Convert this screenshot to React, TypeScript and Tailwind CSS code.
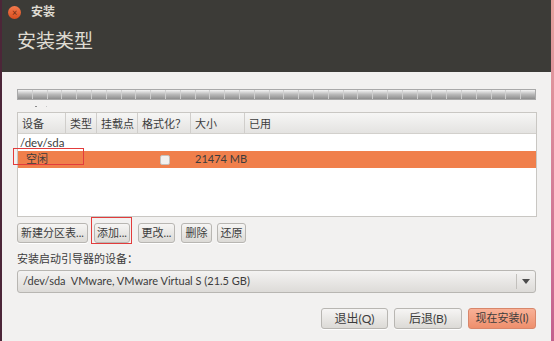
const font = { fontFamily: 'Lato, "Noto Sans CJK SC", sans-serif' };
const cjk = { fontFamily: '"Noto Sans CJK SC", sans-serif' };

function Btn({ children, className = "" }: { children: React.ReactNode; className?: string }) {
  return (
    <div
      className={`flex items-center justify-center whitespace-nowrap rounded-[3px] border border-[#b8b6b2] bg-gradient-to-b from-[#f6f5f4] to-[#dcdad6] text-[11px] text-[#3c3c3c] shadow-[0_1px_0_#fff] ${className}`}
    >
      {children}
    </div>
  );
}

const cols = [
  { label: "设备", w: "w-[48px]" },
  { label: "类型", w: "w-[31px]" },
  { label: "挂载点", w: "w-[41px]" },
  { label: "格式化？", w: "w-[53px]" },
  { label: "大小", w: "w-[54px]" },
  { label: "已用", w: "flex-1" },
];

export default function App() {
  return (
    <div className="flex h-[341px] w-[554px] overflow-hidden bg-[#c7628f]" style={font}>
      {/* left edge */}
      <div className="w-[2px] bg-[#4c2638]" />

      <div className="flex w-[549px] flex-col bg-[#f2f1f0]">
        {/* dark header */}
        <div className="h-[72px] bg-[#3c3b37]">
          <div className="flex h-[24px] items-center pl-[6px]">
            <div className="flex h-[13px] w-[13px] items-center justify-center rounded-full bg-gradient-to-b from-[#f47a4c] to-[#d94d1d] text-[9px] leading-none text-[#6b2a10]">
              ×
            </div>
            <span className="ml-[10px] text-[12px] font-bold text-[#dfdbd2]">安装</span>
          </div>
          <div className="pl-[15px] pt-[5px] text-[19px] leading-[24px] text-[#dfdbd2]">安装类型</div>
        </div>

        <div className="flex flex-1 flex-col px-[15px]">
          {/* partition bar */}
          <div className="mt-[17px] flex h-[11px] w-[519px] border border-[#a9a9a9] bg-gradient-to-b from-[#f4f4f4] via-[#b8b8b8] to-[#8e8e8e]">
            {Array.from({ length: 35 }).map((_, i) => (
              <div key={i} className="h-full flex-1 border-r border-[#cfcfcf] last:border-r-0" />
            ))}
          </div>
          <div className="flex h-[12px] items-center gap-[9px] pl-[18px]">
            <div className="h-[1px] w-[2px] bg-[#8a8a8a]" />
            <div className="h-[1px] w-[1px] bg-[#c8c8c8]" />
          </div>

          {/* table */}
          <div className="flex h-[105px] w-[520px] flex-col border border-[#c9c7c3] bg-white">
            <div className="flex h-[21px] border-b border-[#d2d0cc] bg-gradient-to-b from-[#f6f6f5] to-[#e4e3e1] text-[11px] text-[#3c3c3c]">
              {cols.map((c, i) => (
                <div
                  key={c.label}
                  style={cjk}
                  className={`${c.w} flex items-center whitespace-nowrap pl-[4px] ${i < cols.length - 1 ? "border-r border-[#d0cecb]" : ""}`}
                >
                  {c.label}
                </div>
              ))}
            </div>
            <div className="flex h-[17px] items-center pl-[2px] text-[11.5px] text-[#3c3c3c]">/dev/sda</div>
            <div className="relative flex h-[17px] items-center bg-[#f07f4b] text-[11px] text-[#3c3c3c]">
              <span className="w-[142px] pl-[8px]">空闲</span>
              <div className="h-[10px] w-[10px] rounded-[2px] border border-[#c4c0bc] bg-[#f2f0ee]" />
              <span className="ml-[25px]">21474 MB</span>
              <div className="absolute left-[-5px] top-[-3px] h-[17px] w-[71px] border border-[#e23c3c]" />
            </div>
          </div>

          {/* buttons */}
          <div className="mt-[6px] flex h-[20px] items-stretch">
            <Btn className="w-[71px]">新建分区表...</Btn>
            <div className="relative ml-[6px] flex">
              <Btn className="w-[36px]">添加...</Btn>
              <div className="absolute left-[-3px] top-[-6px] h-[27px] w-[41px] border border-[#e23c3c]" />
            </div>
            <Btn className="ml-[8px] w-[37px]">更改...</Btn>
            <Btn className="ml-[6px] w-[31px]">删除</Btn>
            <Btn className="ml-[5px] w-[29px]">还原</Btn>
          </div>

          <div className="mt-[7px] text-[11px] leading-[18px] text-[#3c3c3c]">安装启动引导器的设备：</div>

          {/* combobox */}
          <div className="mt-[2px] flex h-[23px] w-[519px] items-center rounded-[3px] border border-[#b8b6b2] bg-gradient-to-b from-[#f4f3f2] to-[#dddbd8] text-[11px] text-[#3c3c3c]">
            <span className="flex-1 pl-[5px]">/dev/sda&nbsp;&nbsp;VMware, VMware Virtual S (21.5 GB)</span>
            <div className="h-[15px] w-[1px] bg-[#c2c0bc]" />
            <div className="flex w-[18px] justify-center">
              <svg width="8" height="5" viewBox="0 0 8 5">
                <path d="M0 0 L8 0 L4 5 Z" fill="#4c4c4c" />
              </svg>
            </div>
          </div>

          {/* bottom buttons */}
          <div className="mt-[15px] flex h-[21px] w-[519px] justify-end gap-[6px]">
            <Btn className="w-[67px] text-[12px]">退出(Q)</Btn>
            <Btn className="w-[68px] text-[12px]">后退(B)</Btn>
            <div className="flex w-[68px] items-center justify-center whitespace-nowrap rounded-[3px] border border-[#d8866a] bg-gradient-to-b from-[#f8b197] to-[#ee8f6c] text-[11px] text-[#3c3c3c]">
              现在安装(I)
            </div>
          </div>
        </div>
      </div>

      <div className="flex-1 bg-gradient-to-b from-[#e9a2a0] to-[#c45f8e]" />
    </div>
  );
}
